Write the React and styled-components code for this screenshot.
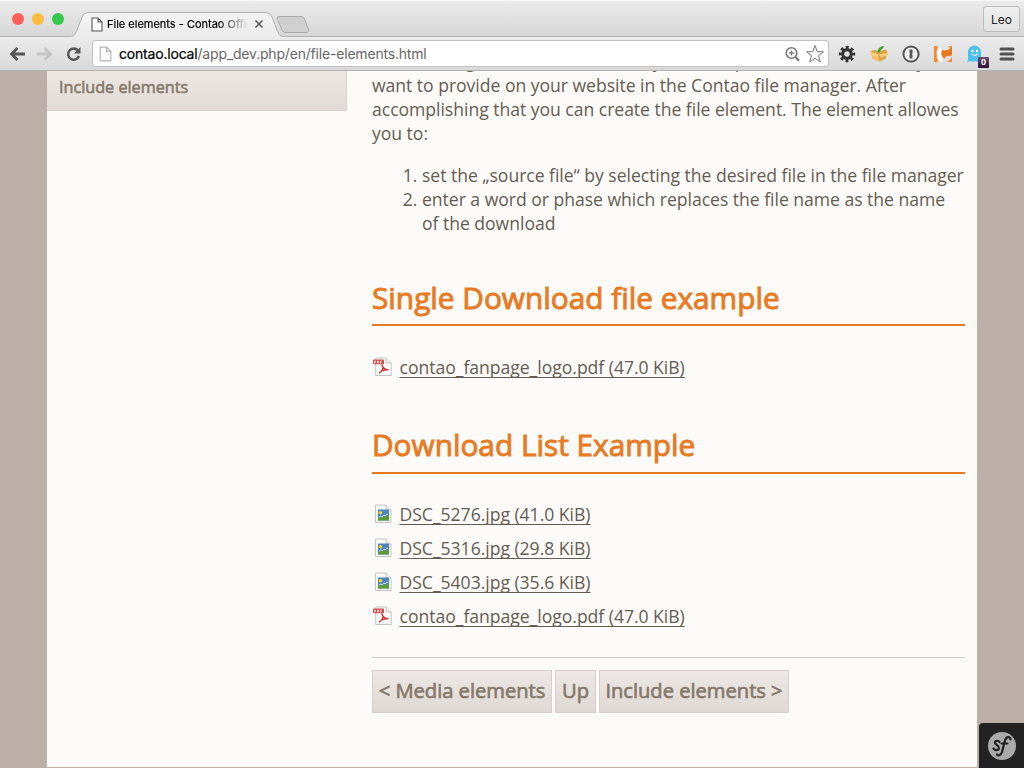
import React from "react";
import styled, { createGlobalStyle } from "styled-components";

const Global = createGlobalStyle`
  * { box-sizing: border-box; }
  body { margin: 0; overflow: hidden; font-family: "Open Sans", sans-serif; }
`;

const Window = styled.div`
  width: 1024px;
  height: 768px;
  display: flex;
  flex-direction: column;
  overflow: hidden;
  background: #fcfbf9;
`;
const TabStrip = styled.div`
  height: 37px;
  flex: none;
  position: relative;
  display: flex;
  align-items: flex-start;
  background: linear-gradient(#ebebeb, #d6d6d6);
  border-top: 1px solid #f6f6f6;
  font-family: Inter, "Liberation Sans", sans-serif;
`;
const Lights = styled.div`
  display: flex;
  gap: 8px;
  padding: 12px 0 0 12px;
`;
const Light = styled.span`
  width: 12px;
  height: 12px;
  border-radius: 50%;
  background: ${(p) => p.$c};
`;
const TabShapes = styled.svg`
  position: absolute;
  left: 0;
  top: -1px;
`;
const Tab = styled.div`
  position: relative;
  display: flex;
  align-items: center;
  height: 24px;
  margin: 11px 0 0 27px;
`;
const TabTitle = styled.span`
  width: 143px;
  margin-left: 4px;
  overflow: hidden;
  white-space: nowrap;
  font-size: 11px;
  letter-spacing: 0;
  color: #000;
  -webkit-text-stroke: 0.2px #000;
  mask-image: linear-gradient(90deg, #000 78%, transparent 99%);
`;
const CloseIcon = styled.svg`
  margin-left: 4px;
`;
const User = styled.div`
  position: absolute;
  right: 4px;
  top: 5px;
  width: 37px;
  height: 26px;
  border: 1px solid #bcbcbc;
  border-radius: 3px;
  background: linear-gradient(#efefef, #e2e2e2);
  font-size: 12px;
  line-height: 26px;
  text-align: center;
  color: #222;
`;
const Toolbar = styled.div`
  height: 34px;
  flex: none;
  display: flex;
  align-items: center;
  padding-left: 8px;
  background: linear-gradient(#ebebeb, #d9d9d9);
  border-bottom: 1px solid #b3b3b3;
`;
const Address = styled.div`
  display: flex;
  align-items: center;
  width: 737px;
  height: 27px;
  margin-left: 9px;
  padding: 0 4px 0 6px;
  border: 1px solid #c2c2c2;
  border-radius: 3px;
  background: #fff;
  font-family: Inter, "Liberation Sans", sans-serif;
`;
const Url = styled.span`
  flex: 1;
  margin-left: 7px;
  font-size: 14px;
  letter-spacing: -0.19px;
  color: #666;
  b { font-weight: 400; color: #000; -webkit-text-stroke: 0.2px #000; }
`;
const Extensions = styled.div`
  display: flex;
  align-items: center;
  gap: 12px;
  margin-left: 8px;
`;
const Ext = styled.span`
  position: relative;
  display: flex;
  width: 20px;
  height: 20px;
`;
const Badge = styled.span`
  position: absolute;
  left: 13px;
  top: 13px;
  width: 11px;
  height: 11px;
  border-radius: 1px;
  background: linear-gradient(#6d4f73, #2b1035);
  color: #fff;
  font: bold 9px/11px "Liberation Sans", sans-serif;
  text-align: center;
`;

const Page = styled.div`
  flex: 1;
  min-height: 0;
  position: relative;
  display: flex;
  justify-content: center;
  overflow: hidden;
  background: #bdafa7;
`;
const Content = styled.div`
  display: flex;
  width: 930px;
  margin-bottom: 1px;
  background: #fcfbf9;
`;
const Sidebar = styled.nav`
  width: 300px;
`;
const SideItem = styled.a`
  display: block;
  height: 40px;
  padding-left: 12px;
  border: solid #d9cfcb;
  border-width: 0 1px 1px 0;
  background: linear-gradient(#ede7e4, #e1dad7);
  font-size: 16.2px;
  line-height: 32px;
  color: #85786a;
  -webkit-text-stroke: 0.55px #85786a;
`;
const Main = styled.main`
  width: 593px;
  margin: -22px 0 0 25px;
  font-size: 17.6px;
  letter-spacing: -0.035px;
  line-height: 24px;
  color: #655c51;
  white-space: nowrap;
`;
const Para = styled.p`
  margin: 0;
`;
const Steps = styled.ol`
  margin: 18px 0 0;
  padding-left: 50px;
`;
const Heading = styled.h2`
  height: ${(p) => p.$h}px;
  margin: 0;
  display: flex;
  align-items: flex-end;
  padding-bottom: ${(p) => p.$pb}px;
  border-bottom: 2px solid #e77a22;
  font-size: 29.8px;
  letter-spacing: 0;
  line-height: 40px;
  font-weight: 400;
  color: #e77a22;
  -webkit-text-stroke: 0.9px #e77a22;
`;
const Files = styled.div`
  display: flex;
  flex-direction: column;
  gap: 10px;
  padding-top: ${(p) => p.$top}px;
`;
const FileRow = styled.div`
  display: flex;
  align-items: center;
  height: 24px;
  gap: 7.5px;
  a {
    text-decoration: underline;
    text-decoration-skip-ink: none;
    text-decoration-thickness: 1px;
    text-underline-offset: 3px;
  }
`;
const Pager = styled.div`
  display: flex;
  gap: 3px;
  margin-top: 29px;
  padding-top: 12px;
  border-top: 1px solid #d5ccc8;
`;
const PageButton = styled.a`
  width: ${(p) => p.$w}px;
  height: 43px;
  border: 1px solid #d8cdc8;
  background: linear-gradient(#ede8e5, #dfd8d5);
  text-align: center;
  font-size: 20.2px;
  line-height: 39px;
  color: #85786a;
  -webkit-text-stroke: 0.65px #85786a;
`;
const DebugBadge = styled.div`
  position: absolute;
  right: 0;
  bottom: 0;
  width: 45px;
  height: 45px;
  border-radius: 4px 0 0 0;
  background: #222;
`;

const Doc = ({ c = "#555", w = 12 }) => (
  <svg width={w} height={w + 3} viewBox="0 0 12 15" fill="#fafafa" stroke={c} strokeWidth="1.1">
    <path d="M1 1h6l4 4v9H1zM7 1v4h4" />
  </svg>
);
const PdfIcon = () => (
  <svg width="20" height="20" viewBox="0 0 20 20">
    <path d="M3.700 1h10.500l5 5v12.500H3.700z" fill="#fafafa" stroke="#c4c4c4" />
    <path d="M14.200 1v5h5" fill="#eee" stroke="#c4c4c4" />
    <rect x="1" y="2.500" width="11" height="4.800" rx="1" fill="#c94a4a" />
    <path d="M2.500 6.700V4h1.200v1.300H2.500M5.500 4v2.200h1.200V4zM8.500 6.700V4h1.800M8.500 5.300h1.300" stroke="#fff" strokeWidth=".6" fill="none" />
    <path d="M9.700 7.500c.8 3 2.400 5 6.800 5.400M11 11c-.4 2.500-1.400 4-4 5.200M9 14.200c2-.9 4.800-1.500 7.500-1.300" stroke="#c33" strokeWidth="1.400" fill="none" />
  </svg>
);
const JpgIcon = () => (
  <svg width="20" height="20" viewBox="0 0 20 20">
    <path d="M3.500 1h10.500l5 5v12.500H3.500z" fill="#fafafa" stroke="#c4c4c4" />
    <path d="M14 1v5h5" fill="#eee" stroke="#c4c4c4" />
    <rect x="6" y="5.500" width="11" height="11" fill="#4c86bf" />
    <path d="M6 16.500v-2.500l4-2 3 1 4-2v5.500z" fill="#5a9c38" />
    <path d="M7 13l2-1 1 1 2-2 1 1 2-2 1 .5" stroke="#c8dde8" fill="none" />
    <circle cx="8.500" cy="8.800" r="1.800" fill="#ffd21d" />
  </svg>
);

const files = [
  ["jpg", "DSC_5276.jpg (41.0 KiB)"],
  ["jpg", "DSC_5316.jpg (29.8 KiB)"],
  ["jpg", "DSC_5403.jpg (35.6 KiB)"],
  ["pdf", "contao_fanpage_logo.pdf (47.0 KiB)"],
];
const File = ({ type, name }) => (
  <FileRow>
    {type === "pdf" ? <PdfIcon /> : <JpgIcon />}
    <a>{name}</a>
  </FileRow>
);

export default function App() {
  return (
    <Window>
      <Global />
      <TabStrip>
        <TabShapes width="1024" height="38" viewBox="0 0 1024 38">
          <defs>
            <linearGradient id="tab" x2="0" y2="1">
              <stop stopColor="#f4f4f4" />
              <stop offset="1" stopColor="#ebebeb" />
            </linearGradient>
          </defs>
          <path d="M0 36.500H70C75 36.500 75 34 77 30L82 17Q84 12.500 88 12.500H266Q270 12.500 272 17L277 30C279 34 279 36.500 284 36.500H1024V38H0Z" fill="url(#tab)" />
          <path d="M0 36.500H70C75 36.500 75 34 77 30L82 17Q84 12.500 88 12.500H266Q270 12.500 272 17L277 30C279 34 279 36.500 284 36.500H1024" fill="none" stroke="#b0b0b0" />
          <path d="M279 16.500H301Q303.500 16.500 304.500 19L308.500 29.500Q309.500 32.500 306 32.500H286Q283 32.500 282 30L277.500 19.500Q276.500 16.500 279 16.500Z" fill="#d0d0d0" stroke="#aaa" />
        </TabShapes>
        <Lights>
          <Light $c="#fc605b" />
          <Light $c="#fdbc40" />
          <Light $c="#34c84a" />
        </Lights>
        <Tab>
          <Doc />
          <TabTitle>File elements - Contao Official Demo</TabTitle>
          <CloseIcon width="10" height="10" viewBox="0 0 10 10" stroke="#555" strokeWidth="1.500">
            <path d="M1.500 1.500l7 7M8.500 1.500l-7 7" />
          </CloseIcon>
        </Tab>
        <User>Leo</User>
      </TabStrip>
      <Toolbar>
        <svg width="75" height="20" viewBox="0 0 75 20" fill="none" strokeWidth="2.800">
          <path d="M17 10H4M9.500 4L3.500 10l6 6" stroke="#555" />
          <path d="M29 10H42M36.500 4l6 6-6 6" stroke="#c4c4c4" />
          <path d="M70 6.500A5.600 5.600 0 1 0 71 12" stroke="#555" strokeWidth="2.500" />
          <path d="M72.500 3v6.500H66z" fill="#555" />
        </svg>
        <Address>
          <Doc c="#b5b5b5" w={13} />
          <Url><b>contao.local</b>/app_dev.php/en/file-elements.html</Url>
          <svg width="44" height="20" viewBox="0 0 44 20" fill="none" stroke="#777">
            <circle cx="11.500" cy="9" r="5.300" strokeWidth="1.600" />
            <path d="M9 9h5M11.500 6.500v5" strokeWidth="1.300" />
            <path d="M15.500 13l3.500 3.800" strokeWidth="2.200" />
            <path d="M35 1.500l2.200 6.100 6.200.200-4.900 3.900 1.800 6.200-5.300-3.600-5.300 3.600 1.800-6.200-4.900-3.900 6.200-.200z" strokeWidth="1" />
          </svg>
        </Address>
        <Extensions>
          <Ext>
            <svg width="20" height="20" viewBox="-10 -10 20 20" fill="none" stroke="#333">
              <circle r="4.300" strokeWidth="3.200" />
              <circle r="6.800" strokeWidth="2.800" strokeDasharray="2.900 2.440" strokeDashoffset="1.450" />
            </svg>
          </Ext>
          <Ext>
            <svg width="20" height="20" viewBox="0 0 20 20">
              <path d="M1 7.500l4-1.500 6 1 6-1.500 2 4-2 1.500v3.500l-6 3-7-3v-4z" fill="#dda446" />
              <path d="M3 11l7 2v4.500l-7-3z" fill="#f0bd64" />
              <path d="M1 7.500l9 3-2 3-7-2.500zM19 8.500l-9 2 2 3 7-2.500z" fill="#f5cb80" />
              <path d="M8.500 8.500c0-4.500 3-6 7-6.500-1 2.500-4 3-4.500 6.500z" fill="#3fa32c" />
            </svg>
          </Ext>
          <Ext>
            <svg width="20" height="20" viewBox="0 0 20 20">
              <circle cx="10" cy="10" r="7.600" fill="#f1f1f1" stroke="#555" strokeWidth="2" />
              <path d="M8.500 5.500h3v4l-.7.700.7.800v3.500h-3v-4l.7-.7-.7-.8z" fill="#555" />
            </svg>
          </Ext>
          <Ext>
            <svg width="20" height="20" viewBox="0 0 20 20">
              <path d="M1 2h4Q2 10 5 18H1zM15 2h4v3zM14 18q3-2 5-5v5z" fill="#f28b2c" />
              <path d="M6 2.500Q3 10 6.500 17.500h3.500Q7 11 9 5.500z" fill="#fff" />
              <path d="M9 6q5 1.500 10-3v8q-3 2-6 1l-1 2.500q-3-1-3.500-3.500-.5-3 .5-5z" fill="#e57a1e" />
            </svg>
          </Ext>
          <Ext>
            <svg width="20" height="20" viewBox="0 0 20 20">
              <path d="M3 16V8a6.500 6.500 0 0 1 13 0v8l1 2-3-1-2 1-2-1-2 1-2-1-4 1z" fill="#4fc0eb" />
              <circle cx="7.500" cy="7" r="1.200" fill="#fff" />
              <circle cx="12" cy="7" r="1.200" fill="#fff" />
              <path d="M6.500 10q3 3 6.500 0" stroke="#fff" fill="none" />
            </svg>
            <Badge>0</Badge>
          </Ext>
          <Ext>
            <svg width="20" height="20" viewBox="0 0 20 20" stroke="#505050" strokeWidth="3" strokeLinecap="round">
              <path d="M4 5h12M4 10h12M4 15h12" />
            </svg>
          </Ext>
        </Extensions>
      </Toolbar>
      <Page>
        <Content>
          <Sidebar>
            <SideItem>Include elements</SideItem>
          </Sidebar>
          <Main>
            <Para>
              Before using file element necessary to first upload all of these files you<br />
              want to provide on your website in the Contao file manager. After<br />
              accomplishing that you can create the file element. The element allowes<br />
              you to:
            </Para>
            <Steps>
              <li>set the „source file“ by selecting the desired file in the file manager</li>
              <li>enter a word or phase which replaces the file name as the name<br />of the download</li>
            </Steps>
            <Heading $h={91} $pb={6}>Single Download file example</Heading>
            <Files $top={29}>
              <File type="pdf" name="contao_fanpage_logo.pdf (47.0 KiB)" />
            </Files>
            <Heading $h={95} $pb={7}>Download List Example</Heading>
            <Files $top={28}>
              {files.map(([type, name]) => <File key={name} type={type} name={name} />)}
            </Files>
            <Pager>
              <PageButton $w={180}>&lt; Media elements</PageButton>
              <PageButton $w={41}>Up</PageButton>
              <PageButton $w={190}>Include elements &gt;</PageButton>
            </Pager>
          </Main>
        </Content>
        <DebugBadge>
          <svg width="45" height="45" viewBox="0 0 45 45" fill="none" stroke="#222" strokeLinecap="round">
            <circle cx="23" cy="23" r="14" fill="#aaa" stroke="none" />
            <path d="M20.500 19c-1-2-5-1.500-4.500 1 .4 2 4.500 2.800 4 5.300-.5 2.300-4.500 2.300-5.500.200" strokeWidth="2.200" />
            <path d="M31.500 16.500c0-3-4-3.500-5.500 1l-3 11.500c-1 3-3.500 4.500-5 2.500M22.500 20.500h6" strokeWidth="2.200" />
          </svg>
        </DebugBadge>
      </Page>
    </Window>
  );
}
